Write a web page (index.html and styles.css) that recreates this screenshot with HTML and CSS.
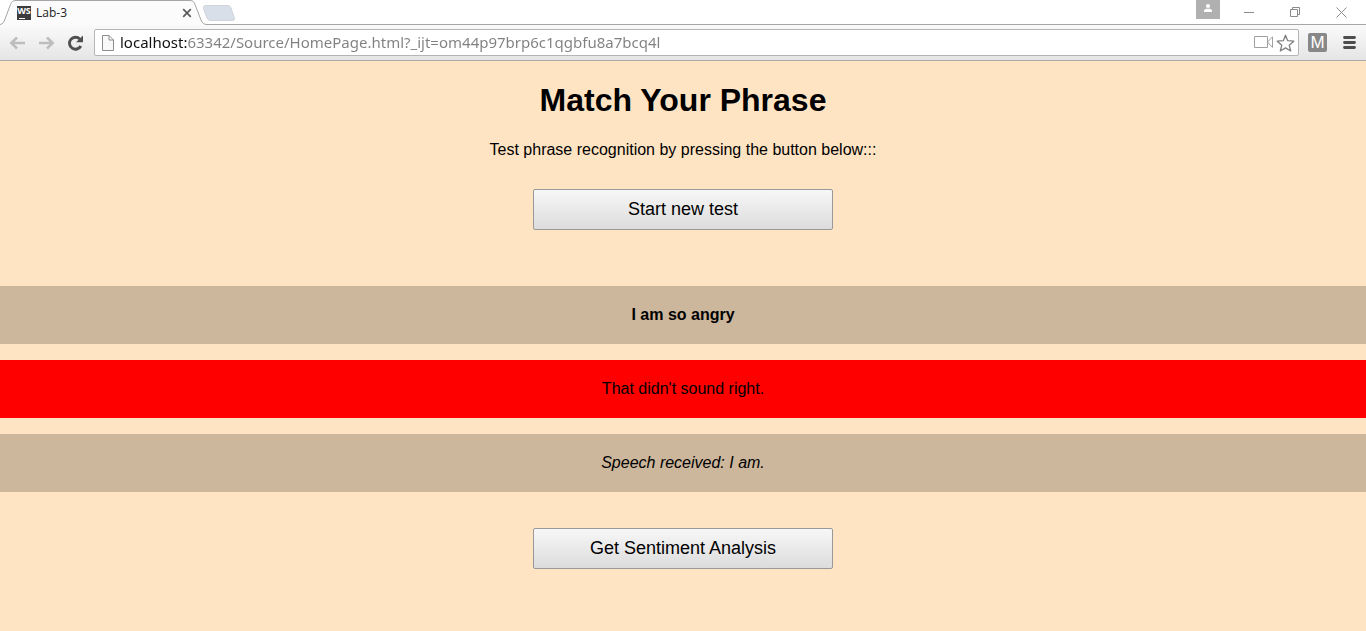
FILE: index.html
```html
<!DOCTYPE html>
<html lang="en">
<head>
<meta charset="utf-8">
<title>Lab-3</title>
<link rel="stylesheet" href="styles.css">
</head>
<body>
<header class="browser">
  <div class="tab-strip">
    <div class="tab">
      <svg class="tab-shape" width="240" height="25" viewBox="0 0 240 25" aria-hidden="true">
        <path d="M0 24.5C3 24 4 22 5 19L10.500 4.500C11.500 1.500 13 .5 16 .5H190C193 .5 194 1.500 195 4.500L201 20C202 23 204 24.500 207 24.500V25H0Z" fill="#fbfbfb"/>
        <path d="M0 24.500C3 24 4 22 5 19L10.500 4.500C11.500 1.500 13 .5 16 .5H190C193 .5 194 1.500 195 4.500L201 20C202 23 204 24.500 207 24.500H240" fill="none" stroke="#a6a6a6"/>
        <path d="M206 5.500H227C229 5.500 230 6 231 8L234 17C235 20 234 20.500 232 20.500H212C209 20.500 208 20 207 18L203.500 8.500C203 6.500 204 5.500 206 5.500Z" fill="#d9dfe8" stroke="#cfd4db"/>
      </svg>
      <span class="favicon">WS</span>
      <span class="tab-title">Lab-3</span>
      <button class="icon-button tab-close" aria-label="Close tab">
        <svg width="10" height="10" viewBox="0 0 10 10"><path d="M1.200 1.200L8.800 8.800M8.800 1.200L1.200 8.800" stroke="#5a5a5a" stroke-width="1.700"/></svg>
      </button>
    </div>
    <div class="window-controls">
      <button class="icon-button profile" aria-label="Profile">
        <svg width="24" height="19" viewBox="0 0 24 19"><circle cx="12" cy="6" r="2.100" fill="#fff"/><path d="M8 12V10.500C8 9.300 10 8.800 12 8.800S16 9.300 16 10.500V12Z" fill="#fff"/></svg>
      </button>
      <button class="icon-button control" aria-label="Minimize">
        <svg width="11" height="11" viewBox="0 0 11 11"><path d="M0 5.500H10" stroke="#8b8b8b"/></svg>
      </button>
      <button class="icon-button control" aria-label="Restore">
        <svg width="11" height="11" viewBox="0 0 11 11" fill="none" stroke="#8b8b8b"><path d="M.5 2.500H7.500V9.500H.5ZM2.500 2V.5H9.500V7.500H8"/></svg>
      </button>
      <button class="icon-button control" aria-label="Close window">
        <svg width="11" height="11" viewBox="0 0 11 11"><path d="M.5 .5L10.500 10.500M10.500 .5L.5 10.500" stroke="#8b8b8b"/></svg>
      </button>
    </div>
  </div>
  <div class="toolbar">
    <button class="icon-button nav" aria-label="Back">
      <svg width="17" height="14" viewBox="0 0 17 14" fill="none" stroke="#bdbdbd" stroke-width="2.500"><path d="M8 1.500L2.300 7L8 12.500M2.500 7H16"/></svg>
    </button>
    <button class="icon-button nav" aria-label="Forward">
      <svg width="17" height="14" viewBox="0 0 17 14" fill="none" stroke="#bdbdbd" stroke-width="2.500"><path d="M9 1.500L14.700 7L9 12.500M14.500 7H1"/></svg>
    </button>
    <button class="icon-button nav" aria-label="Reload">
      <svg width="17" height="16" viewBox="0 0 17 16"><path d="M13.800 11A6 6 0 1 1 12.800 4" fill="none" stroke="#505050" stroke-width="2.900"/><path d="M16 .5V7.200H9Z" fill="#505050"/></svg>
    </button>
    <div class="address-bar">
      <svg width="12" height="16" viewBox="0 0 12 16" aria-hidden="true"><path d="M.5 .5H7L11.500 5V15.500H.5ZM7 .5V5H11.500" fill="#f8f8f8" stroke="#8c8c8c"/></svg>
      <input class="url" type="text" aria-label="Address" spellcheck="false" value="localhost:63342/Source/HomePage.html?_ijt=om44p97brp6c1qgbfu8a7bcq4l">
      <button class="icon-button" aria-label="Camera">
        <svg width="20" height="13" viewBox="0 0 20 13" fill="none" stroke="#a0a0a0"><path d="M.5 .5H13.500V11.500H.5ZM13.500 6L18.500 .8V11.500L13.500 6"/></svg>
      </button>
      <button class="icon-button star" aria-label="Bookmark this page">
        <svg width="19" height="18" viewBox="0 0 19 18"><path d="M9.500 1.200L11.700 6.700L17.800 7.200L13.200 11.200L14.700 17L9.500 13.900L4.300 17L5.800 11.200L1.200 7.200L7.300 6.700Z" fill="#fff" stroke="#808080" stroke-width="1.300" stroke-linejoin="round"/></svg>
      </button>
    </div>
    <button class="icon-button extension" aria-label="Extension M">M</button>
    <button class="icon-button menu" aria-label="Menu">
      <svg width="13" height="13" viewBox="0 0 13 13"><path d="M1.500 1.500H11.500M1.500 6.500H11.500M1.500 11.500H11.500" stroke="#4d4d4d" stroke-width="2.800" stroke-linecap="round"/></svg>
    </button>
  </div>
</header>
<main class="page">
  <h1 class="title">Match Your Phrase</h1>
  <p class="intro">Test phrase recognition by pressing the button below:::</p>
  <button class="action">Start new test</button>
  <section class="results">
    <p class="band phrase">I am so angry</p>
    <p class="band result">That didn't sound right.</p>
    <p class="band output">Speech received: I am.</p>
  </section>
  <button class="action">Get Sentiment Analysis</button>
</main>
</body>
</html>
```
FILE: styles.css
```css
* {
  box-sizing: border-box;
}

body {
  display: flex;
  flex-direction: column;
  min-height: 100vh;
  margin: 0;
  background: #ffe4c4;
  color: #000;
  font-family: "Liberation Sans", Arial, sans-serif;
  font-size: 16px;
}

.icon-button {
  display: flex;
  flex: none;
  align-items: center;
  justify-content: center;
  padding: 0;
  border: 0;
  background: none;
}

.tab-strip {
  display: flex;
  justify-content: space-between;
  height: 25px;
  background: linear-gradient(#a6a6a6, #a6a6a6) bottom / 100% 1px no-repeat #fff;
}

.tab {
  position: relative;
  display: flex;
  align-items: center;
  width: 240px;
  padding-left: 17px;
  font-family: "Open Sans", "Noto Sans", sans-serif;
  font-size: 12px;
}

.tab-shape {
  position: absolute;
  inset: 0;
}

.favicon,
.tab-title,
.tab-close {
  position: relative;
}

.favicon {
  width: 14px;
  height: 14px;
  background: linear-gradient(#fff, #fff) 2px 12px / 6px 1px no-repeat #3c3c3c;
  color: #fff;
  font: bold 9px/10px "Open Sans", sans-serif;
  text-align: center;
}

.tab-title {
  width: 146px;
  padding-left: 5px;
  color: #222;
}

.tab-close {
  width: 18px;
  margin-left: 1px;
}

.window-controls {
  display: flex;
  align-items: flex-start;
  padding-right: 2px;
}

.profile {
  margin-right: 6px;
  background: #b0b0b0;
}

.control {
  width: 46px;
  height: 24px;
}

.toolbar {
  display: flex;
  align-items: center;
  height: 36px;
  padding: 0 10px 0 9px;
  border-bottom: 1px solid #aaa;
  background: linear-gradient(#fafafa, #e5e5e5);
}

.nav {
  width: 17px;
  height: 24px;
  margin-right: 12px;
}

.address-bar {
  display: flex;
  flex: 1;
  align-items: center;
  height: 27px;
  margin-right: 9px;
  padding: 0 3px 0 7px;
  border: 1px solid #b5b5b5;
  border-radius: 2px;
  background: #fff;
}

.nav + .address-bar {
  margin-left: -2px;
}

.url {
  flex: 1;
  min-width: 0;
  padding: 0 0 2px 6px;
  border: 0;
  outline: 0;
  background: linear-gradient(to right, #111 73px, #808080 73px);
  -webkit-background-clip: text;
  background-clip: text;
  color: transparent;
  font-family: "Noto Sans", "Open Sans", sans-serif;
  font-size: 15px;
}

.star {
  margin-left: 2px;
}

.extension {
  width: 19px;
  height: 19px;
  margin-right: 16px;
  border-radius: 2px;
  background: #888;
  color: #fff;
  font: 17px/19px "Liberation Sans", sans-serif;
}

.page {
  flex: 1;
  text-align: center;
}

.title {
  margin: 20px 0;
  font-size: 32px;
  line-height: 38px;
}

.intro {
  margin: 0 0 28px;
  line-height: 22px;
}

.action {
  width: 300px;
  max-width: 100%;
  height: 41px;
  padding: 0 0 2px;
  border: 1px solid #999;
  border-radius: 2px;
  background: linear-gradient(#f7f7f7, #dcdcdc);
  color: #000;
  font: 18px/20px "Liberation Sans", Arial, sans-serif;
  vertical-align: top;
}

.results {
  display: grid;
  gap: 16px;
  margin: 56px 0 36px;
}

.band {
  margin: 0;
  padding: 20px;
  background: rgba(0, 0, 0, 0.2);
  line-height: 18px;
}

.phrase {
  font-weight: bold;
}

.result {
  background: #f00;
}

.output {
  font-style: italic;
}
```
